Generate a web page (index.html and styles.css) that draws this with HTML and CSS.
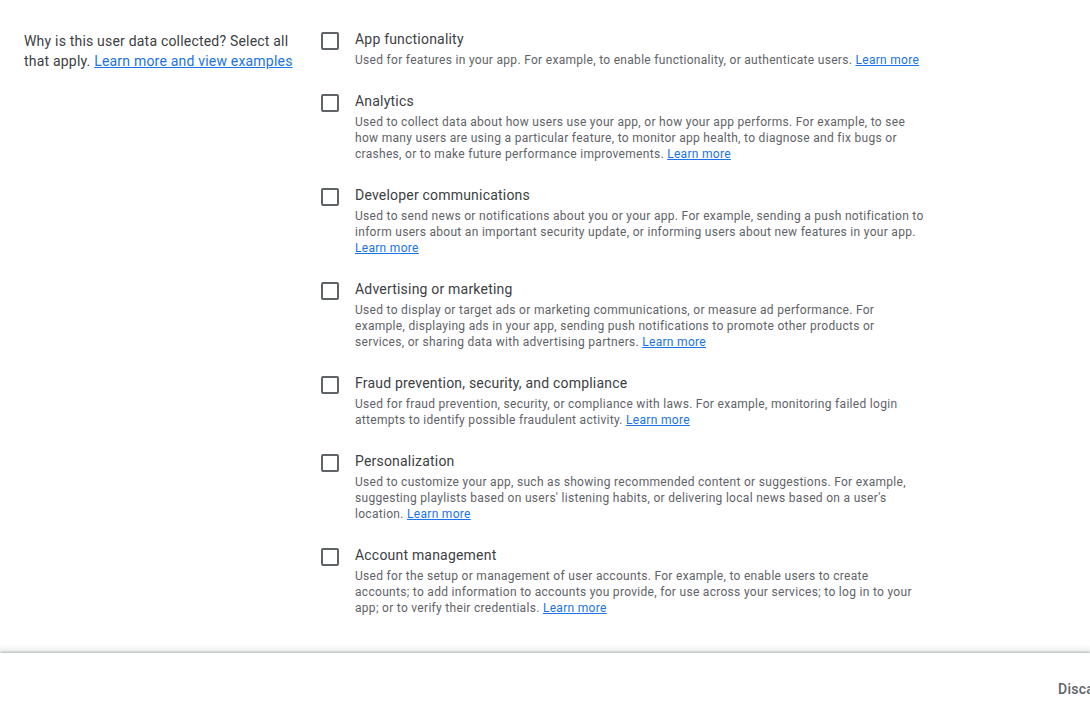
FILE: index.html
```html
<!DOCTYPE html>
<html lang="en">
<head>
<meta charset="utf-8">
<title>Data collection purposes</title>
<link rel="stylesheet" href="styles.css">
</head>
<body>
<div class="page">
  <main class="section">
    <div class="question">Why is this user data collected? Select all that apply. <a href="#" class="link">Learn more and view examples</a></div>
    <ul class="options">
      <li class="option">
        <span class="checkbox"></span>
        <div class="option-text">
          <div class="option-title">App functionality</div>
          <div class="option-desc">Used for features in your app. For example, to enable functionality, or authenticate users. <a href="#" class="link">Learn more</a></div>
        </div>
      </li>
      <li class="option">
        <span class="checkbox"></span>
        <div class="option-text">
          <div class="option-title">Analytics</div>
          <div class="option-desc">Used to collect data about how users use your app, or how your app performs. For example, to see how many users are using a particular feature, to monitor app health, to diagnose and fix bugs or crashes, or to make future performance improvements. <a href="#" class="link">Learn more</a></div>
        </div>
      </li>
      <li class="option">
        <span class="checkbox"></span>
        <div class="option-text">
          <div class="option-title">Developer communications</div>
          <div class="option-desc">Used to send news or notifications about you or your app. For example, sending a push notification to inform users about an important security update, or informing users about new features in your app. <a href="#" class="link">Learn more</a></div>
        </div>
      </li>
      <li class="option">
        <span class="checkbox"></span>
        <div class="option-text">
          <div class="option-title">Advertising or marketing</div>
          <div class="option-desc">Used to display or target ads or marketing communications, or measure ad performance. For example, displaying ads in your app, sending push notifications to promote other products or services, or sharing data with advertising partners. <a href="#" class="link">Learn more</a></div>
        </div>
      </li>
      <li class="option">
        <span class="checkbox"></span>
        <div class="option-text">
          <div class="option-title">Fraud prevention, security, and compliance</div>
          <div class="option-desc">Used for fraud prevention, security, or compliance with laws. For example, monitoring failed login attempts to identify possible fraudulent activity. <a href="#" class="link">Learn more</a></div>
        </div>
      </li>
      <li class="option">
        <span class="checkbox"></span>
        <div class="option-text">
          <div class="option-title">Personalization</div>
          <div class="option-desc">Used to customize your app, such as showing recommended content or suggestions. For example, suggesting playlists based on users' listening habits, or delivering local news based on a user's location. <a href="#" class="link">Learn more</a></div>
        </div>
      </li>
      <li class="option">
        <span class="checkbox"></span>
        <div class="option-text">
          <div class="option-title">Account management</div>
          <div class="option-desc">Used for the setup or management of user accounts. For example, to enable users to create accounts; to add information to accounts you provide, for use across your services; to log in to your app; or to verify their credentials. <a href="#" class="link">Learn more</a></div>
        </div>
      </li>
    </ul>
  </main>
  <footer class="footer">
    <div class="footer-actions">
      <button class="btn">Discard changes</button>
      <button class="btn btn-primary">Save</button>
    </div>
  </footer>
</div>
</body>
</html>
```
FILE: styles.css
```css
html, body {
  margin: 0;
  padding: 0;
  background: #fff;
  overflow: hidden;
}
body {
  font-family: Roboto, "Liberation Sans", Arial, sans-serif;
  color: #3c4043;
  -webkit-font-smoothing: antialiased;
}
.page {
  display: flex;
  flex-direction: column;
  height: 725px;
  width: 1090px;
}
.section {
  flex: 1;
  display: flex;
  align-items: flex-start;
  padding: 29px 0 0 24px;
}
.question {
  width: 278px;
  margin-top: 2px;
  margin-right: 19px;
  font-size: 14px;
  line-height: 20px;
  letter-spacing: 0.2px;
  color: #3c4043;
}
.link {
  color: #1a73e8;
  text-decoration: underline;
}
.options {
  list-style: none;
  margin: 0;
  padding: 0;
  display: flex;
  flex-direction: column;
  gap: 23px;
}
.option {
  display: flex;
  align-items: flex-start;
  gap: 16px;
}
.checkbox {
  flex: none;
  box-sizing: border-box;
  width: 18px;
  height: 18px;
  margin-top: 3px;
  border: 2px solid #5f6368;
  border-radius: 2px;
}
.option-text {
  width: 569px;
}
.option-title {
  font-size: 14px;
  line-height: 20px;
  color: #3c4043;
  letter-spacing: 0.2px;
}
.option-desc {
  margin-top: 3px;
  font-size: 12px;
  line-height: 16px;
  color: #5f6368;
  letter-spacing: 0.3px;
}
.footer {
  flex: none;
  height: 72px;
  display: flex;
  align-items: center;
  background: #fff;
  box-shadow: 0 -1px 2px rgba(60, 64, 67, 0.3), 0 -2px 6px 2px rgba(60, 64, 67, 0.12);
}
.footer-actions {
  display: flex;
  gap: 8px;
  margin-left: 1046px;
}
.btn {
  flex: none;
  font-family: Roboto, "Liberation Sans", Arial, sans-serif;
  font-size: 14px;
  font-weight: 500;
  letter-spacing: 0.25px;
  color: #5f6368;
  background: none;
  border: none;
  padding: 8px 12px;
  white-space: nowrap;
}
.btn-primary {
  color: #fff;
  background: #1a73e8;
  border-radius: 4px;
}
```
